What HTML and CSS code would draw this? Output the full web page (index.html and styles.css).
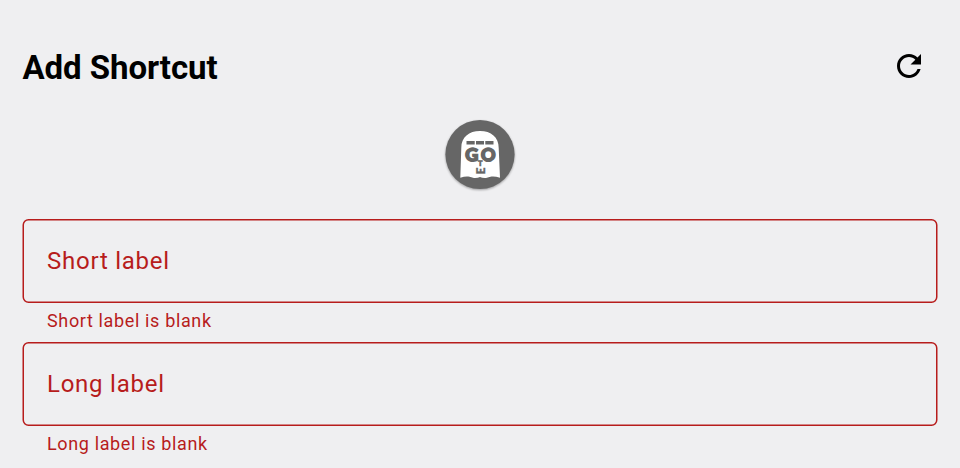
FILE: index.html
```html
<!DOCTYPE html>
<html lang="en">
<head>
<meta charset="utf-8">
<title>Add Shortcut</title>
<link rel="stylesheet" href="styles.css">
</head>
<body>
<main class="page">
  <header class="header">
    <h1 class="title">Add Shortcut</h1>
    <button class="refresh" aria-label="Refresh">
      <svg width="36" height="36" viewBox="0 0 24 24"><path d="M17.65 6.35C16.2 4.9 14.21 4 12 4c-4.42 0-7.99 3.58-7.99 8s3.57 8 7.99 8c3.73 0 6.84-2.55 7.73-6h-2.08c-.82 2.33-3.04 4-5.65 4-3.31 0-6-2.69-6-6s2.69-6 6-6c1.66 0 3.14.69 4.22 1.78L13 11h7V4l-2.35 2.35z"/></svg>
    </button>
  </header>
  <svg class="avatar" width="80" height="80" viewBox="0 0 80 80">
    <circle class="disc" cx="40" cy="40.5" r="34.6"/>
    <path class="ghost" d="M21.300 34C21.300 23 29 17 40 17S58.700 23 58.700 34L60 63.800Q56 62.400 53 62.400C49 62.400 48 64 45 64Q42 64 40 63Q38 64 35 64C32 64 31 62.400 27 62.400Q24 62.400 20.300 63.800Z"/>
    <path class="ink" d="M26.500 27h8.200v3.500h-8.200zM36 27h8v3.500h-8zM45.300 27h8.200v3.500h-8.200z"/>
    <text class="eye" x="25.300" y="47.300" textLength="13" lengthAdjust="spacingAndGlyphs">G</text>
    <text class="eye" x="41.100" y="47.300" textLength="14.500" lengthAdjust="spacingAndGlyphs">O</text>
    <text class="nose" x="40.200" y="52.300">T</text>
    <text class="mouth" transform="translate(44.500 60.500) rotate(-90)" x="0" y="0">E</text>
  </svg>
  <section class="group">
    <div class="field">
      <svg class="outline" width="916" height="84"><rect x="1.250" y=".75" width="913.500" height="82.500" rx="5.250"/></svg>
      <span>Short label</span>
    </div>
    <p class="error">Short label is blank</p>
  </section>
  <section class="group">
    <div class="field">
      <svg class="outline" width="916" height="84"><rect x="1.250" y=".75" width="913.500" height="82.500" rx="5.250"/></svg>
      <span>Long label</span>
    </div>
    <p class="error">Long label is blank</p>
  </section>
</main>
</body>
</html>
```
FILE: styles.css
```css
* { box-sizing: border-box; }
body { margin: 0; background: #efeff1; font-family: Roboto, sans-serif; overflow: hidden; }
.page { height: 468px; padding: 40px 22px 0; display: flex; flex-direction: column; }
.header { height: 54px; display: flex; justify-content: space-between; align-items: center; padding-right: 11px; }
.title { margin: 2px 0 0 .5px; font-size: 33px; line-height: 44px; font-weight: 700; letter-spacing: -.07px; color: #000; }
.refresh { width: 36px; height: 36px; padding: 0; border: 0; background: none; margin-top: -2px; }
.refresh svg { display: block; }
.avatar { flex: none; align-self: center; margin: 20px 0 25px; }
.disc { fill: #666; filter: drop-shadow(0 1px 1px rgba(0, 0, 0, .35)); }
.ghost { fill: #fff; }
.ink, .avatar text { fill: #666; }
.avatar text { font-family: Lato, sans-serif; font-weight: 900; text-rendering: geometricPrecision; }
.eye { font-size: 17.5px; stroke: #666; stroke-width: 1.6px; }
.nose { font-size: 7.5px; text-anchor: middle; stroke: #666; stroke-width: .6px; }
.mouth { font-size: 12px; stroke: #666; stroke-width: .4px; }
.group { height: 123px; flex: none; }
.field { position: relative; height: 84px; padding: 0 25px; display: flex; align-items: center; font-size: 24px; letter-spacing: .75px; color: #b71c1c; }
.outline { position: absolute; inset: 0; fill: none; stroke: #b71c1c; stroke-width: 1.5px; }
.error { margin: 6px 0 0 25px; font-size: 18px; line-height: 24px; letter-spacing: .64px; color: #b71c1c; }
```
